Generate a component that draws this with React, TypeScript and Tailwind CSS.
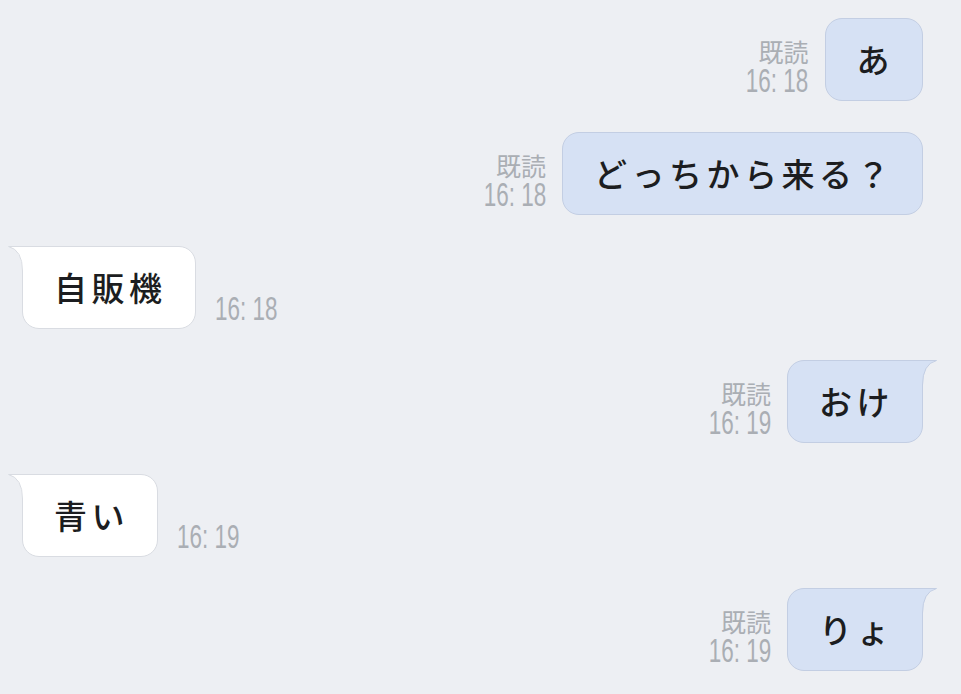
import React from 'react';

type Msg = {
  side: 'me' | 'them';
  text: string;
  time: string;
  tail?: boolean;
};

const messages: Msg[] = [
  { side: 'me', text: 'あ', time: '16: 18' },
  { side: 'me', text: 'どっちから来る？', time: '16: 18' },
  { side: 'them', text: '自販機', time: '16: 18', tail: true },
  { side: 'me', text: 'おけ', time: '16: 19', tail: true },
  { side: 'them', text: '青い', time: '16: 19', tail: true },
  { side: 'me', text: 'りょ', time: '16: 19', tail: true },
];

const Tail = ({ me }: { me: boolean }) => (
  <svg
    width="17"
    height="26"
    viewBox="0 0 17 26"
    className={
      me
        ? 'absolute -top-px left-[calc(100%-1px)]'
        : 'absolute -top-px right-[calc(100%-1px)] -scale-x-100'
    }
  >
    <path d="M0 0 H16 Q2 4 2 25 H0 Z" fill={me ? '#d6e1f4' : '#ffffff'} />
    <path d="M0 0.5 H15.5 Q1.5 4 1.5 25" fill="none" stroke={me ? '#c3cee3' : '#d9dce2'} strokeWidth="1" />
  </svg>
);

const Time = ({ time, me }: { time: string; me: boolean }) => (
  <div className={`flex w-[62px] h-[28px] ${me ? 'justify-end' : 'justify-start'}`}>
    <span
      className={`inline-block whitespace-nowrap text-[33.5px] leading-[28px] text-[#aaaeb4] scale-x-[0.67] ${me ? 'origin-right' : 'origin-left'}`}
      style={{ fontFamily: '"Liberation Sans", sans-serif' }}
    >
      {time}
    </span>
  </div>
);

const Bubble = ({ m }: { m: Msg }) => {
  const me = m.side === 'me';
  return (
    <div
      className={`relative flex h-[83px] items-center rounded-[17px] border pl-[29px] pr-[28px] text-[33px] font-medium tracking-[4.5px] text-[#1c1d20] ${
        me ? 'bg-[#d6e1f4] border-[#c3cee3]' : 'bg-white border-[#d9dce2]'
      } ${m.tail ? (me ? 'rounded-tr-none' : 'rounded-tl-none') : ''}`}
    >
      {m.tail && <Tail me={me} />}
      <span className="whitespace-nowrap pl-[2px]">{m.text}</span>
    </div>
  );
};

export default function App() {
  return (
    <div
      className="min-h-screen bg-[#edeff3] pt-[18px] pl-[22px] pr-[38px] flex flex-col gap-[31px]"
      style={{ fontFamily: '"Noto Sans CJK JP", "Noto Sans", sans-serif' }}
    >
      {messages.map((m, i) =>
        m.side === 'me' ? (
          <div key={i} className="flex items-end justify-end h-[83px]">
            <div className="flex flex-col items-end mr-[16px] mb-[6px]">
              <span className="text-[25px] leading-[26px] mb-[3px] text-[#aaaeb4]">既読</span>
              <Time time={m.time} me />
            </div>
            <Bubble m={m} />
          </div>
        ) : (
          <div key={i} className="flex items-end h-[83px]">
            <Bubble m={m} />
            <div className="ml-[19px] mb-[6px]">
              <Time time={m.time} me={false} />
            </div>
          </div>
        )
      )}
    </div>
  );
}
